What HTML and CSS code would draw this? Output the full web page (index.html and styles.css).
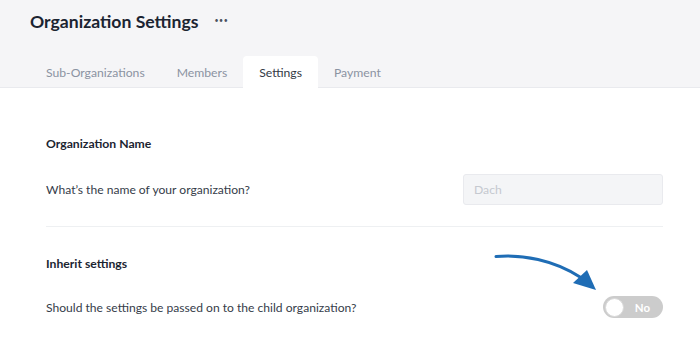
FILE: index.html
```html
<!DOCTYPE html>
<html>
<head>
<meta charset="utf-8">
<link rel="stylesheet" href="styles.css">
</head>
<body>
<div class="page">
  <header class="header">
    <div class="title-row">
      <h1 class="title">Organization Settings</h1>
      <span class="more">•••</span>
    </div>
    <nav class="tabs">
      <span class="tab">Sub-Organizations</span>
      <span class="tab">Members</span>
      <span class="tab active">Settings</span>
      <span class="tab">Payment</span>
    </nav>
  </header>
  <main class="content">
    <section class="section">
      <h2 class="section-title">Organization Name</h2>
      <div class="row">
        <span class="label">What’s the name of your organization?</span>
        <div class="input">Dach</div>
      </div>
    </section>
    <section class="section last">
      <h2 class="section-title">Inherit settings</h2>
      <div class="row row-toggle">
        <span class="label">Should the settings be passed on to the child organization?</span>
        <div class="toggle"><span class="knob"></span><span class="toggle-text">No</span></div>
      </div>
    </section>
    <svg class="arrow" width="120" height="50" viewBox="0 0 120 50">
      <path d="M4 10.5 C 30 8, 62 14, 88 31" fill="none" stroke="#1f6db5" stroke-width="3" stroke-linecap="round"/>
      <polygon points="81,37 95,24 104,44" fill="#1f6db5"/>
    </svg>
  </main>
</div>
</body>
</html>
```
FILE: styles.css
```css
* { box-sizing: border-box; }
body {
  margin: 0;
  font-family: "Lato", "Liberation Sans", sans-serif;
  background: #ffffff;
}
.page { width: 700px; height: 340px; overflow: hidden; }
.header {
  background: #f5f5f7;
  border-bottom: 1px solid #e9eaee;
  padding: 0 0 0 30px;
}
.title-row {
  display: flex;
  align-items: center;
  height: 42px;
}
.title {
  margin: 0;
  font-size: 17.6px;
  font-weight: 700;
  color: #1b2431;
}
.more {
  margin-left: 16px;
  font-size: 7px;
  color: #4a5160;
  letter-spacing: 0.5px;
  position: relative;
  top: -1px;
}
.tabs {
  display: flex;
  margin-top: 14px;
  height: 32px;
  margin-bottom: -1px;
}
.tab {
  display: flex;
  align-items: center;
  padding: 0 16px;
  font-size: 12.2px;
  color: #8b93a2;
  border-radius: 4px 4px 0 0;
}
.tab.active {
  background: #ffffff;
  color: #333a45;
}
.content {
  position: relative;
  padding: 0 37px 0 46px;
}
.section { padding-top: 48px; padding-bottom: 21px; border-bottom: 1px solid #eef0f2; }
.section.last { border-bottom: none; padding-top: 29px; }
.section-title {
  margin: 0;
  font-size: 12.2px;
  font-weight: 700;
  color: #1b2431;
  line-height: 16px;
}
.row {
  display: flex;
  align-items: center;
  justify-content: space-between;
  margin-top: 22px;
}
.row-toggle { margin-top: 24px; }
.label {
  font-size: 12.1px;
  color: #353c49;
}
.input {
  width: 200px;
  height: 31px;
  background: #f4f5f7;
  border: 1px solid #e9eaee;
  border-radius: 3px;
  padding: 0 10px;
  display: flex;
  align-items: center;
  font-size: 12.2px;
  color: #c5c9d0;
}
.toggle {
  width: 60px;
  height: 22px;
  background: #cccccc;
  border-radius: 11px;
  display: flex;
  align-items: center;
  padding: 0 2px;
}
.knob {
  width: 19px;
  height: 19px;
  border-radius: 50%;
  background: #ffffff;
  border: 1px solid #d9d9d9;
}
.toggle-text {
  flex: 1;
  text-align: center;
  color: #ffffff;
  font-weight: 700;
  font-size: 11.5px;
}
.arrow {
  position: absolute;
  left: 492px;
  top: 158px;
}
```
